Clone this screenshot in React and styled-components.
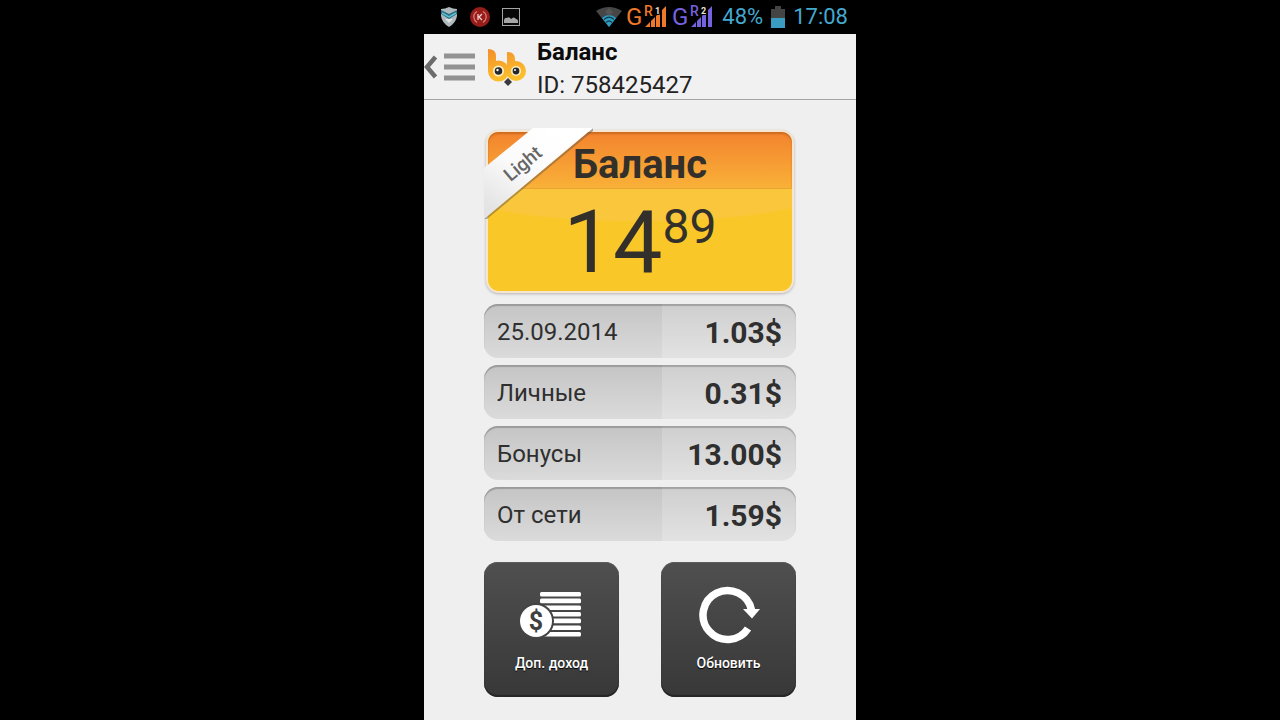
import React from "react";
import styled, { createGlobalStyle } from "styled-components";

const GlobalStyle = createGlobalStyle`
  * {
    box-sizing: border-box;
  }

  body {
    margin: 0;
    background: #000;
    font-family: Roboto, "Liberation Sans", sans-serif;
    color: #2f2f2f;
  }
`;

const Phone = styled.div`
  display: flex;
  flex-direction: column;
  width: 100%;
  max-width: 432px;
  min-height: 100vh;
  margin: 0 auto;
  background: #efefef;
`;

const StatusBar = styled.div`
  display: flex;
  align-items: center;
  justify-content: space-between;
  height: 34px;
  padding: 0 8px 0 16px;
  background: #000;
`;

const Notifications = styled.div`
  display: flex;
  align-items: center;
  gap: 12px;
`;

const SystemInfo = styled.div`
  display: flex;
  align-items: center;
  gap: 8px;
  font-size: 22px;
  line-height: 34px;
  color: #44a9cf;
`;

const Header = styled.header`
  display: flex;
  align-items: center;
  height: 66px;
  background: #f1f1f1;
  border-bottom: 1px solid #a4a4a4;
`;

const MenuButton = styled.button`
  display: flex;
  padding: 0;
  border: 0;
  background: none;
`;

const HeaderText = styled.div`
  margin-left: 10px;
  padding-top: 4px;
  line-height: 33px;
  font-size: 24px;
  color: #222;
`;

const Title = styled.h1`
  margin: 0;
  font-size: 24px;
  font-weight: 700;
  color: #0c0c0c;
`;

const UserId = styled.div``;

const Content = styled.main`
  flex: 1;
  padding: 29px 60px 23px;
`;

const BalanceCard = styled.section`
  position: relative;
  height: 163px;
  margin: 1px 2px 11px;
  border: 2px solid #f6e6cf;
  border-radius: 13px;
  background:
    radial-gradient(ellipse 64% 34px at 50% 56px, #f9c63c 96%, transparent 100%),
    #fac728;
  box-shadow: 0 1px 3px rgba(0, 0, 0, 0.25);
  text-align: center;
  color: #33302b;
`;

const CardTitle = styled.h2`
  margin: 0;
  height: 57px;
  border-bottom: 1px solid #e9a534;
  border-radius: 10px 10px 0 0;
  background: linear-gradient(#f3832e, #f9b138);
  box-shadow: inset 0 2px 2px rgba(150, 70, 10, 0.4);
  font-size: 40px;
  line-height: 66px;
  font-weight: 700;
`;

const Amount = styled.div`
  display: flex;
  justify-content: center;
  align-items: flex-start;
  font-size: 88px;
  line-height: 106px;
`;

const Cents = styled.span`
  font-size: 48px;
  line-height: 76px;
`;

const Ribbon = styled.div`
  position: absolute;
  top: -4px;
  left: -4px;
  width: 112px;
  height: 94px;
`;

const RibbonText = styled.span`
  position: absolute;
  top: 24px;
  left: 13px;
  width: 52px;
  font-size: 19px;
  line-height: 24px;
  font-weight: 500;
  color: #666;
  transform: rotate(-40deg);
`;

const Rows = styled.dl`
  display: flex;
  flex-direction: column;
  gap: 7px;
  margin: 0 0 21px;
`;

const Row = styled.div`
  display: grid;
  grid-template-columns: 4fr 3fr;
  height: 54px;
  border-radius: 14px;
  overflow: hidden;
  background: linear-gradient(#cfcfcf, #e2e2e2);
  box-shadow: inset 0 2px 1px #a2a2a2;
  line-height: 56px;
`;

const RowLabel = styled.dt`
  padding-left: 13px;
  background: linear-gradient(rgba(0, 0, 0, 0.05), rgba(0, 0, 0, 0.03));
  font-size: 24px;
`;

const RowValue = styled.dd`
  margin: 0;
  padding-right: 14px;
  font-size: 30px;
  line-height: 58px;
  font-weight: 700;
  text-align: right;
`;

const Actions = styled.div`
  display: flex;
  justify-content: space-between;
`;

const ActionButton = styled.button`
  display: flex;
  flex-direction: column;
  align-items: center;
  width: 135px;
  height: 135px;
  padding: 23px 0 0;
  border: 0;
  border-radius: 14px;
  background: linear-gradient(#4f4f4f, #383838);
  box-shadow: inset 0 1px 0 #5c5c5c, inset 0 -2px 1px #262626;
  font-family: inherit;
  font-size: 14px;
  line-height: 20px;
  font-weight: 500;
  color: #fff;
  text-shadow: 0 1px 1px #000;
`;

const ActionIcon = styled.svg`
  flex: none;
  width: 64px;
  height: 60px;
  margin-bottom: 8px;
`;

function ShieldIcon() {
  return (
    <svg width="18" height="20" viewBox="0 0 18 20">
      <path d="M1 2Q5 2 9 0Q13 2 17 2V9Q16 16 9 20Q2 16 1 9Z" fill="#aeb9bd" />
      <path d="M1 3L9 7L17 3V7L9 12L1 7Z" fill="#2d6d80" />
      <path d="M2 6L9 10L16 6" fill="none" stroke="#58c0d4" strokeWidth="1.5" />
      <path d="M5 12H13L9 16Z" fill="#dfe3e4" />
    </svg>
  );
}

function RedIcon() {
  return (
    <svg width="20" height="20" viewBox="0 0 20 20">
      <circle cx="10" cy="10" r="10" fill="#981c19" />
      <path d="M7 4.5Q3 7 4 11Q4.5 14 7 15.5M13 4.5Q17 7 16 11Q15.5 14 13 15.5" fill="none" stroke="#d9867f" strokeWidth="1.2" />
      <path d="M8 7V13M12 7L9 10L12 13" fill="none" stroke="#f1d0cc" strokeWidth="1.3" />
    </svg>
  );
}

function PictureIcon() {
  return (
    <svg width="18" height="18" viewBox="0 0 18 18">
      <rect x="0.5" y="0.5" width="17" height="17" fill="#080808" stroke="#a5a5a5" />
      <path d="M2 15V12Q3 9 5 10Q7 8 9 11Q12 8 14 11Q16 11 16 13V15Z" fill="#a5a5a5" />
    </svg>
  );
}

const Signals = styled.div`
  display: flex;
  align-items: center;
  gap: 4px;
`;

function WifiIcon() {
  return (
    <svg width="26" height="20" viewBox="0 0 26 20">
      <path d="M0 4Q13 -4 26 4L13 20Z" fill="#464646" />
      <path d="M6 11Q13 5 20 11L13 20Z" fill="#2d9fc4" />
      <path d="M9 5L13 1L17 5L13 9Z" fill="#555" />
      <path d="M8 12.5Q13 8 18 12.5M10 15.5Q13 12.5 16 15.5" fill="none" stroke="#143f50" strokeWidth="1.3" />
    </svg>
  );
}

function SignalIcon({ color, sim }) {
  return (
    <svg width="42" height="34" viewBox="0 0 42 34" fontFamily="Roboto, sans-serif">
      <text x="0" y="25" fontSize="24" fill={color}>G</text>
      <text x="18" y="16" fontSize="14" fontWeight="500" fill={color}>R</text>
      <path d="M19 27L24 22V27ZM25 27V21L29 17V27ZM30 27V16L34 12V27ZM36 27V10L40 6V27Z" fill={color} />
      <text x="29" y="14" fontSize="9" fontWeight="700" fill="#ece5d5" stroke="#000" strokeWidth="2" paintOrder="stroke">
        {sim}
      </text>
    </svg>
  );
}

function BatteryIcon() {
  return (
    <svg width="14" height="22" viewBox="0 0 14 22">
      <path d="M4 0H10V3H14V22H0V3H4Z" fill="#444" />
      <rect y="12" width="14" height="10" fill="#3a9cc0" />
    </svg>
  );
}

function MenuIcon() {
  return (
    <svg width="52" height="30" viewBox="0 0 52 30">
      <path d="M11.5 5L3 15L11.5 25" fill="none" stroke="#6c6c6c" strokeWidth="4.5" />
      <path d="M20 4H51M20 15H51M20 26H51" stroke="#929292" strokeWidth="5" />
    </svg>
  );
}

const Logo = styled.svg`
  width: 40px;
  height: 38px;
  margin-left: 11px;
`;

function OwlLogo() {
  return (
    <Logo viewBox="0 0 40 38">
      <defs>
        <linearGradient id="owl" gradientUnits="userSpaceOnUse" x1="0" y1="2" x2="8" y2="34">
          <stop offset="0" stopColor="#f2902c" />
          <stop offset="1" stopColor="#fcbf2b" />
        </linearGradient>
      </defs>
      <path d="M20 4Q28 4 28 11V23H20Z" fill="url(#owl)" />
      <circle cx="29" cy="23" r="10" fill="url(#owl)" />
      <path d="M1 1Q9 1 9 8V23H1Z" fill="url(#owl)" />
      <circle cx="11.500" cy="23" r="10.5" fill="url(#owl)" />
      <circle cx="11.500" cy="23" r="5.5" fill="#fff1c8" />
      <circle cx="29" cy="23" r="5" fill="#fff1c8" />
      <circle cx="11.500" cy="23" r="3.8" fill="#25282c" />
      <circle cx="29" cy="23" r="3.4" fill="#25282c" />
      <circle cx="10.500" cy="22" r="1.2" fill="#fff" />
      <circle cx="28" cy="22" r="1" fill="#fff" />
      <path d="M17 34L21 30L25 34L21 38Z" fill="#393939" />
    </Logo>
  );
}

function RibbonShape() {
  return (
    <svg width="112" height="94" viewBox="0 0 112 94">
      <defs>
        <linearGradient id="ribbon" x1="0.7" y1="0.1" x2="0.1" y2="0.9">
          <stop offset="0" stopColor="#ffffff" />
          <stop offset="0.5" stopColor="#fafafa" />
          <stop offset="1" stopColor="#e4e4e4" />
        </linearGradient>
      </defs>
      <path d="M0 91L109 0V3L3 91Z" fill="#6b5a40" opacity="0.5" />
      <path d="M0 40L49 0H109L0 91Z" fill="url(#ribbon)" />
    </svg>
  );
}

function MoneyIcon() {
  return (
    <ActionIcon viewBox="0 0 64 60">
      {[7, 13.6, 20.4, 27, 33.6, 40.4, 47].map((y, i) => (
        <rect key={y} x={i < 2 ? 20 : 23} y={y} width={i < 2 ? 41 : 38} height="4.6" rx="1.5" fill="#fff" />
      ))}
      <circle cx="16" cy="36" r="18" fill="#444" />
      <circle cx="16" cy="36" r="16" fill="#fff" />
      <text x="16" y="45" fontSize="25" fontWeight="700" textAnchor="middle" fill="#404040" style={{ textShadow: "none" }}>
        $
      </text>
    </ActionIcon>
  );
}

function RefreshIcon() {
  return (
    <ActionIcon viewBox="0 0 64 60">
      <path d="M54.5 25A24.5 24.5 0 1 0 51 43.5" fill="none" stroke="#fff" strokeWidth="7.5" />
      <path d="M46 24H63L55 33.5Z" fill="#fff" />
    </ActionIcon>
  );
}

const rows = [
  { label: "25.09.2014", value: "1.03$" },
  { label: "Личные", value: "0.31$" },
  { label: "Бонусы", value: "13.00$" },
  { label: "От сети", value: "1.59$" },
];

export default function App() {
  return (
    <Phone>
      <GlobalStyle />
      <StatusBar>
        <Notifications>
          <ShieldIcon />
          <RedIcon />
          <PictureIcon />
        </Notifications>
        <SystemInfo>
          <Signals>
            <WifiIcon />
            <SignalIcon color="#f0782a" sim="1" />
            <SignalIcon color="#7463df" sim="2" />
          </Signals>
          <span>48%</span>
          <BatteryIcon />
          <span>17:08</span>
        </SystemInfo>
      </StatusBar>
      <Header>
        <MenuButton aria-label="Меню">
          <MenuIcon />
        </MenuButton>
        <OwlLogo />
        <HeaderText>
          <Title>Баланс</Title>
          <UserId>ID: 758425427</UserId>
        </HeaderText>
      </Header>
      <Content>
        <BalanceCard>
          <CardTitle>Баланс</CardTitle>
          <Amount>
            14<Cents>89</Cents>
          </Amount>
          <Ribbon>
            <RibbonShape />
            <RibbonText>Light</RibbonText>
          </Ribbon>
        </BalanceCard>
        <Rows>
          {rows.map((row) => (
            <Row key={row.label}>
              <RowLabel>{row.label}</RowLabel>
              <RowValue>{row.value}</RowValue>
            </Row>
          ))}
        </Rows>
        <Actions>
          <ActionButton>
            <MoneyIcon />
            Доп. доход
          </ActionButton>
          <ActionButton>
            <RefreshIcon />
            Обновить
          </ActionButton>
        </Actions>
      </Content>
    </Phone>
  );
}
